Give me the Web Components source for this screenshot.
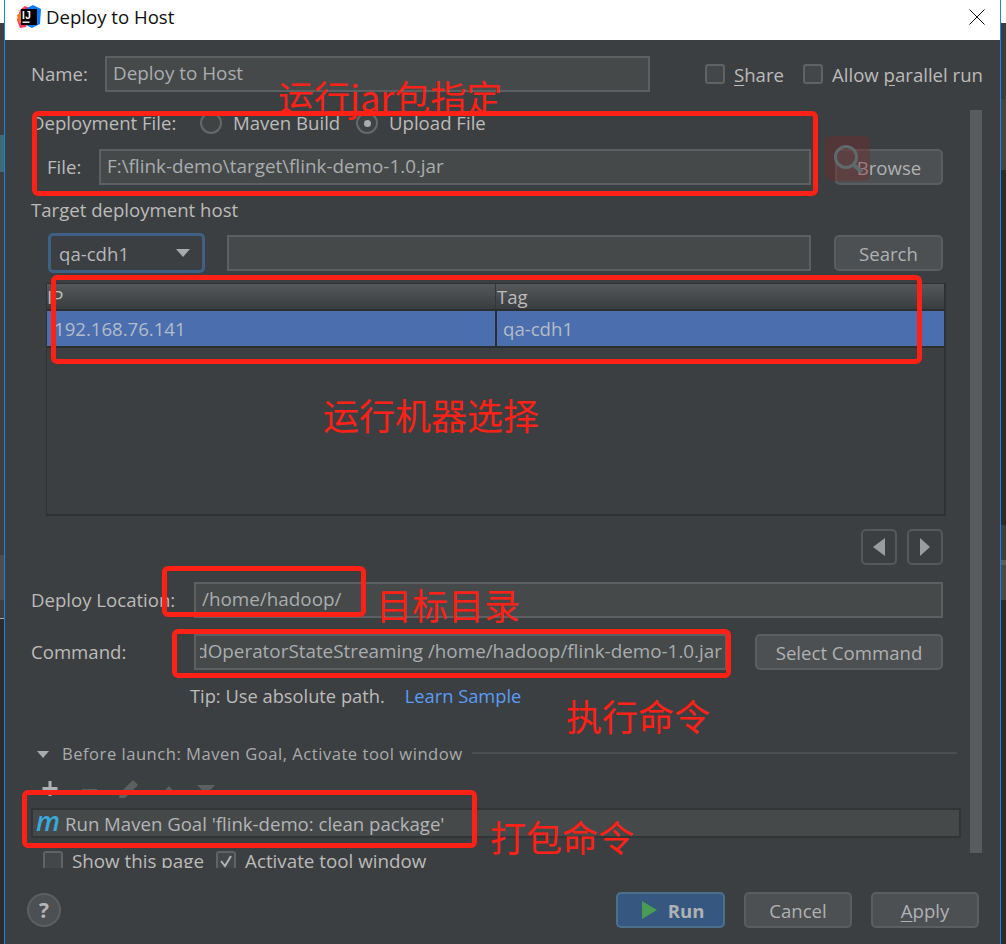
<!DOCTYPE html>
<html>
<head>
<meta charset="utf-8">
<title>Deploy to Host</title>
<style>
    html, body { margin: 0; padding: 0; background: #3c3f41; }
</style>
</head>
<body>
<deploy-page>
    <side-strip class="left"></side-strip>
    <deploy-dialog></deploy-dialog>
    <side-strip class="right"></side-strip>

    <!-- red notes somebody painted over the screenshot -->
    <mark-box style="left:32px;top:111px;width:786px;height:85px"></mark-box>
    <mark-box style="left:51px;top:275px;width:871px;height:89px"></mark-box>
    <mark-box style="left:162px;top:566px;width:204px;height:51px"></mark-box>
    <mark-box style="left:172px;top:629px;width:559px;height:49px"></mark-box>
    <mark-box style="left:22px;top:790px;width:455px;height:58px"></mark-box>
    <mark-text style="left:278px;top:76px">运行jar包指定</mark-text>
    <mark-text style="left:323px;top:394px">运行机器选择</mark-text>
    <mark-text style="left:376px;top:584px">目标目录</mark-text>
    <mark-text style="left:566px;top:695px">执行命令</mark-text>
    <mark-text style="left:490px;top:816px">打包命令</mark-text>
    <search-ghost></search-ghost>
</deploy-page>

<script>
'use strict'

const UiFont = `"Open Sans", "Noto Sans", "Liberation Sans", sans-serif`

function defineElement(name, css, html) {
    customElements.define(name, class extends HTMLElement {
        constructor() {
            super()
            this.attachShadow({ mode: 'open' })
            this.shadowRoot.innerHTML = `<style>${css}</style>${html}`
        }
    })
}

defineElement('deploy-page', `
    :host { display: flex; position: relative; width: 1006px; height: 944px; overflow: hidden;
            font: 18.6px ${UiFont}; color: #bbbbbb; background: #3c3f41; }
`, `<slot></slot>`)

defineElement('side-strip', `
    :host { display: block; flex: none; height: 944px; }
    :host(.left) { width: 4px; background: linear-gradient(#fff 0 23px, #3c3f41 23px 135px, #3f6a7c 135px 172px,
        #3c3f41 172px 555px, #4b4d4f 555px 600px, #3c3f41 600px 618px, #aaa 618px 619px, #2b2b2b 619px); }
    :host(.right) { width: 5px; background: linear-gradient(#fff 0 23px, #3a3d3f 23px 99px, #434547 99px 170px,
        #2b2b2b 170px 525px, #3c3f41 525px 560px, #5a5c5e 560px 565px, #47494b 565px 600px, #2b2b2b 600px); }
`, ``)

defineElement('mark-box', `
    :host { position: absolute; box-sizing: border-box; border: 5px solid #ff2116; border-radius: 6px; }
`, ``)

defineElement('mark-text', `
    :host { position: absolute; font: 400 36px/40px "Noto Sans CJK SC", "Open Sans", sans-serif; color: #ff2116; white-space: nowrap; }
`, `<slot></slot>`)

defineElement('search-ghost', `
    :host { position: absolute; left: 825px; top: 136px; width: 45px; height: 45px; border-radius: 6px;
            background: rgba(120, 40, 40, .38); }
    svg { display: block; }
`, `<svg width="45" height="45" viewBox="0 0 45 45" fill="none" stroke="#5f6a6c" stroke-width="3">
    <circle cx="21" cy="21" r="10.5"/><path d="M29 29l8 7" stroke-width="4"/></svg>`)

defineElement('title-bar', `
    :host { display: flex; align-items: center; flex: none; box-sizing: border-box; height: 40px; padding-bottom: 8px;
            background: #fff; color: #111; }
    .logo { position: relative; width: 24px; height: 24px; margin: 2px 5px 0 12px; }
    svg { display: block; }
    .logo span { position: absolute; left: 5px; top: 5px; font: bold 10px/11px "Liberation Sans", sans-serif; color: #fff; letter-spacing: .5px; }
    .close { margin: 2px 15px 0 auto; }
`, `<div class="logo">
        <svg width="24" height="24" viewBox="0 0 24 24">
            <path d="M0 15L3 5 8 1l6 3-5 18-6 1z" fill="#fe315d"/>
            <path d="M0 10l5-3 3 10-6 1z" fill="#f97a12"/>
            <path d="M10 3l6-3 8 4-1 15-8 4-6-3z" fill="#087cfa"/>
            <rect x="4" y="4" width="16" height="16" fill="#000"/>
            <rect x="5.5" y="16.5" width="7" height="1.4" fill="#fff"/>
        </svg>
        <span>IJ</span>
    </div>
    <slot></slot>
    <svg class="close" width="16" height="16" viewBox="0 0 16 16" stroke="#111" stroke-width="1"><path d="M.5.5l15 15M15.5.5l-15 15"/></svg>`)

defineElement('ide-input', `
    :host { display: flex; align-items: center; box-sizing: border-box; height: 36px; padding: 0 6px 2px;
            background: #45494a; border: 2px solid #5d5f60; color: #a9adaf; font-size: 18.85px; white-space: nowrap; }
    :host(.end) { padding: 0 3px 3px 4px; }
    .clip { display: flex; flex: 1; min-width: 0; overflow: hidden; }
    :host(.end) .clip { justify-content: flex-end; }
`, `<div class="clip"><slot></slot></div>`)

defineElement('ide-button', `
    :host { display: flex; align-items: center; justify-content: center; flex: none; box-sizing: border-box; height: 36px;
            background: #4c5052; border: 2px solid #5a5e60; border-radius: 5px; color: #afb1b3; white-space: nowrap; }
    :host(.default) { background: #365880; border-color: #4c708c; font-weight: 700; gap: 11px; padding-left: 5px; }
    :host(.icon) { background: transparent; width: 36px; border-color: #55595b; }
`, `<slot></slot>`)

defineElement('ide-check', `
    :host { display: inline-flex; align-items: center; flex: none; white-space: nowrap; }
    .box { box-sizing: border-box; width: 20px; height: 20px; margin-right: 9px; border: 2px solid #5f6365; border-radius: 3px;
           background: #43474a; display: flex; align-items: center; justify-content: center; }
    svg { display: none; }
    :host([checked]) svg { display: block; }
`, `<span class="box"><svg width="14" height="14" viewBox="0 0 14 14" fill="none" stroke="#b0b2b4" stroke-width="2"><path d="M2 7l4 5 6-10"/></svg></span><slot></slot>`)

defineElement('ide-radio', `
    :host { display: inline-flex; align-items: center; flex: none; white-space: nowrap; }
    .dot { box-sizing: border-box; width: 22px; height: 22px; margin-right: 11px; border: 2px solid #666869; border-radius: 50%;
           display: flex; align-items: center; justify-content: center; background: #3f4344; }
    .dot i { display: none; width: 7px; height: 7px; border-radius: 50%; background: #a9abac; }
    :host([checked]) .dot i { display: block; }
    span.text { margin-top: -2px; }
`, `<span class="dot"><i></i></span><span class="text"><slot></slot></span>`)

defineElement('host-combo', `
    :host { display: flex; align-items: center; justify-content: space-between; flex: none; box-sizing: border-box;
            width: 157px; height: 40px; padding: 0 12px 0 8px; border: 3px solid #3d6185; border-radius: 5px; background: #3c3f41; color: #b5b7b9; }
    i { width: 0; height: 0; border: 7px solid transparent; border-top: 8px solid #a8aaac; border-bottom: 0; }
`, `<slot></slot><i></i>`)

defineElement('host-table', `
    :host { display: block; box-sizing: border-box; width: 900px; height: 233px; margin-left: 15px;
            border: 2px solid #2e3032; border-width: 1px 2px 2px 1px; background: #3c3f41; }
    .row { display: grid; grid-template-columns: 448px 1fr; }
    .head { height: 25px; background: linear-gradient(#54585b, #3a3d3f); border-bottom: 2px solid #2b2d2e; }
    .head div { line-height: 25px; }
    .head div + div { border-left: 1px solid #34373a; padding-left: 1px; }
    .sel { height: 35px; background: #4b6eaf; border-bottom: 2px solid #2b2d2e; color: #b4bcc8; }
    .sel div { padding-left: 7px; line-height: 35px; }
    .sel div + div { border-left: 2px solid #2b2d2e; padding-left: 6px; }
`, `<div class="row head"><div>IP</div><div>Tag</div></div>
    <div class="row sel"><div>192.168.76.141</div><div>qa-cdh1</div></div>`)

defineElement('before-launch', `
    :host { display: flex; align-items: center; height: 24px; margin: 0 4px 0 6px; font-size: 16.6px; letter-spacing: .5px; color: #a9abad; white-space: nowrap; }
    span { margin-top: -2px; }
    i { flex: none; width: 0; height: 0; margin-right: 13px; border: 6px solid transparent; border-top: 7px solid #a8aaac; border-bottom: 0; }
    hr { flex: 1; margin: 0 0 2px 9px; border: 0; height: 2px; background: #4b4d4f; }
`, `<i></i><span><slot></slot></span><hr>`)

defineElement('launch-toolbar', `
    :host { display: block; height: 24px; }
    svg { display: block; }
`, `<svg width="200" height="24" viewBox="0 0 200 24">
    <path d="M19 1v15M11.5 8.5h15" stroke="#afb1b3" stroke-width="3" fill="none"/>
    <rect x="51" y="9" width="15" height="3" fill="#5e6060"/>
    <path d="M88 18l1-5 13-13 5 5-13 13z" fill="#5e6060"/>
    <path d="M131 14l7-8 7 8z" fill="#5e6060"/>
    <path d="M166 5h18l-9 9z" fill="#5e6060"/>
</svg>`)

defineElement('goal-list', `
    :host { display: flex; align-items: center; box-sizing: border-box; height: 30px; padding-left: 3px;
            background: #45494a; border: 2px solid #323436; color: #b3b5b7; white-space: nowrap; }
    b { width: 29px; margin-top: -5px; font: italic 600 27px/30px "Open Sans", sans-serif; color: #3ba8d9; }
`, `<b>m</b><slot></slot>`)

defineElement('scroll-thumb', `
    :host { display: block; flex: none; width: 12px; height: 743px; background: #595b5d; }
`, ``)

defineElement('help-button', `
    :host { display: flex; align-items: center; justify-content: center; flex: none; box-sizing: border-box; width: 34px; height: 34px;
            border: 2px solid #5c5f61; border-radius: 50%; background: #4c5052; font-weight: 700; font-size: 21px; color: #b4b6b8; }
`, `?`)

defineElement('deploy-dialog', `
    :host { display: flex; flex-direction: column; flex: none; box-sizing: border-box; width: 997px; height: 944px;
            border: solid #1c84dc; border-width: 0 1px; background: #3c3f41; }
    .label { flex: none; margin-top: -2px; white-space: nowrap; }
    u { text-underline-offset: 3px; }
    .row { display: flex; align-items: center; }

    .name-row { flex: none; height: 36px; margin-top: 16px; padding-left: 26px; }
    .name-row .label { width: 74px; }
    .name-row ide-input { width: 545px; margin-right: 55px; }
    .name-row ide-check + ide-check { margin-left: 19px; }

    .scroller { display: flex; flex: none; height: 758px; margin-top: 18px; padding-left: 26px; overflow: hidden; }
    .form { flex: none; width: 930px; margin-right: 9px; }

    .kind-row { height: 24px; margin-top: 1px; }
    .kind-row .label { width: 169px; }
    .kind-row ide-radio { width: 156px; }
    .file-row { height: 36px; margin: 14px 18px 0 16px; }
    .file-row .label { width: 52px; }
    .file-row ide-input { width: 712px; margin-right: 24px; }
    .file-row ide-button { width: 108px; }
    .target-label { height: 24px; line-height: 22px; margin-top: 14px; }
    .host-row { height: 40px; margin: 10px 18px 0 17px; }
    .host-row host-combo { margin-right: 22px; }
    .host-row ide-input { width: 584px; margin-right: 23px; }
    .host-row ide-button { width: 109px; }
    .table-wrap { margin-top: 10px; }
    .nav-row { justify-content: flex-end; gap: 10px; height: 36px; margin: 13px 18px 0 0; }
    .deploy-row { height: 36px; margin: 17px 18px 0 0; }
    .deploy-row .label { width: 163px; }
    .deploy-row ide-input { flex: 1; }
    .command-row { height: 36px; margin: 16px 18px 0 0; }
    .command-row .label { width: 163px; }
    .command-row ide-input { width: 533px; margin-right: 28px; }
    .command-row ide-button { width: 188px; }
    .tip-row { height: 24px; margin: 13px 0 0 159px; font-size: 18.3px; }
    .tip-row a { margin-left: 20px; color: #589df6; }
    before-launch { margin-top: 35px; }
    launch-toolbar { margin-top: 14px; }
    goal-list { margin-top: 4px; }
    .checks-row { height: 24px; margin: 11px 0 0 12px; }
    .checks-row ide-check { font-size: 18.8px; }
    .checks-row ide-check + ide-check { margin-left: 12px; }

    .footer { flex: none; height: 36px; margin-top: 24px; padding: 0 21px 0 22px; }
    .footer .push { flex: 1; }
    .footer ide-button { width: 108px; }
    .footer ide-button.default { width: 109px; }
    .footer ide-button + ide-button { margin-left: 19px; }
    .play { width: 0; height: 0; border: 9px solid transparent; border-left: 15px solid #499c54; border-right: 0; }
`, `<title-bar>Deploy to Host</title-bar>
    <div class="row name-row">
        <span class="label">Name:</span>
        <ide-input>Deploy to Host</ide-input>
        <ide-check><span><u>S</u>hare</span></ide-check>
        <ide-check><span>Allow <u>p</u>arallel run</span></ide-check>
    </div>
    <div class="scroller">
        <div class="form">
            <div class="row kind-row">
                <span class="label">Deployment File:</span>
                <ide-radio>Maven Build</ide-radio>
                <ide-radio checked>Upload File</ide-radio>
            </div>
            <div class="row file-row">
                <span class="label">File:</span>
                <ide-input>F:\\flink-demo\\target\\flink-demo-1.0.jar</ide-input>
                <ide-button>Browse</ide-button>
            </div>
            <div class="target-label">Target deployment host</div>
            <div class="row host-row">
                <host-combo>qa-cdh1</host-combo>
                <ide-input></ide-input>
                <ide-button>Search</ide-button>
            </div>
            <div class="table-wrap"><host-table></host-table></div>
            <div class="row nav-row">
                <ide-button class="icon"><svg width="12" height="18" viewBox="0 0 12 18"><path d="M12 0v18L0 9z" fill="#9a9c9e"/></svg></ide-button>
                <ide-button class="icon"><svg width="10" height="18" viewBox="0 0 10 18"><path d="M0 0v18l10-9z" fill="#9a9c9e"/></svg></ide-button>
            </div>
            <div class="row deploy-row">
                <span class="label">Deploy Location:</span>
                <ide-input>/home/hadoop/</ide-input>
            </div>
            <div class="row command-row">
                <span class="label">Command:</span>
                <ide-input class="end">dOperatorStateStreaming /home/hadoop/flink-demo-1.0.jar</ide-input>
                <ide-button>Select Command</ide-button>
            </div>
            <div class="row tip-row"><span>Tip: Use absolute path.</span><a>Learn Sample</a></div>
            <before-launch>Before launch: Maven Goal, Activate tool window</before-launch>
            <launch-toolbar></launch-toolbar>
            <goal-list>Run Maven Goal 'flink-demo: clean package'</goal-list>
            <div class="row checks-row">
                <ide-check>Show this page</ide-check>
                <ide-check checked>Activate tool window</ide-check>
            </div>
        </div>
        <scroll-thumb></scroll-thumb>
    </div>
    <div class="row footer">
        <help-button></help-button>
        <div class="push"></div>
        <ide-button class="default"><i class="play"></i>Run</ide-button>
        <ide-button>Cancel</ide-button>
        <ide-button><span><u>A</u>pply</span></ide-button>
    </div>`)
</script>
</body>
</html>
